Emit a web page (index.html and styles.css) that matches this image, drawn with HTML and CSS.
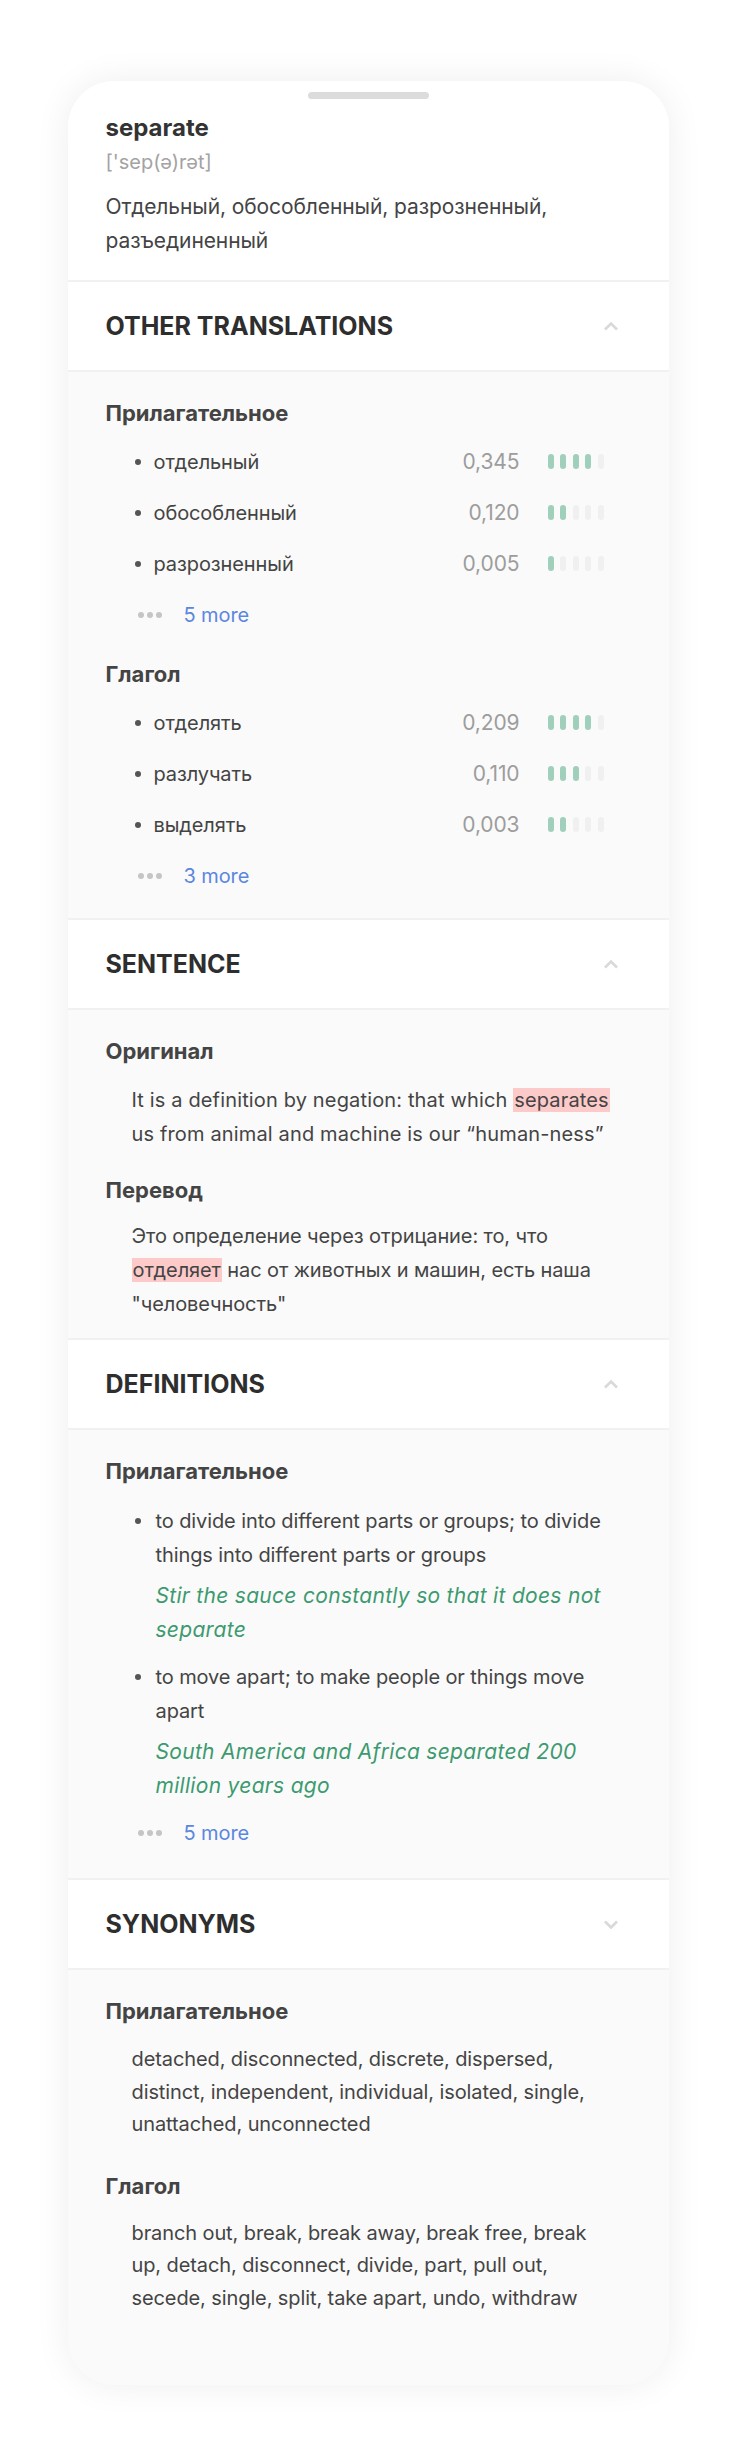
FILE: index.html
```html
<!DOCTYPE html>
<html lang="en">
<head>
<meta charset="UTF-8">
<meta name="viewport" content="width=device-width, initial-scale=1.0">
<title>separate</title>
<link rel="stylesheet" href="styles.css">
</head>
<body>
    <div class="sheet">
        <div class="handle"></div>

        <div class="word-head">
            <div class="word-title">separate</div>
            <div class="transcription">['sep(ə)rət]</div>
            <div class="main-translation">Отдельный, обособленный, разрозненный, разъединенный</div>
        </div>

        <div class="section">
            <div class="section-header">
                <span>OTHER TRANSLATIONS</span>
                <svg class="chevron" viewBox="0 0 16 10"><path d="M2 8.5L8 2.5L14 8.5"/></svg>
            </div>
            <div class="section-body">
                <div class="group-title">Прилагательное</div>
                <div class="row">
                    <span class="dot"></span>
                    <span class="word">отдельный</span>
                    <span class="freq">0,345</span>
                    <span class="bars"><i class="on"></i><i class="on"></i><i class="on"></i><i class="on"></i><i></i></span>
                </div>
                <div class="row">
                    <span class="dot"></span>
                    <span class="word">обособленный</span>
                    <span class="freq">0,120</span>
                    <span class="bars"><i class="on"></i><i class="on"></i><i></i><i></i><i></i></span>
                </div>
                <div class="row">
                    <span class="dot"></span>
                    <span class="word">разрозненный</span>
                    <span class="freq">0,005</span>
                    <span class="bars"><i class="on"></i><i></i><i></i><i></i><i></i></span>
                </div>
                <div class="row more">
                    <span class="more-dots"><b></b><b></b><b></b></span>
                    <a href="#">5 more</a>
                </div>

                <div class="group-title next">Глагол</div>
                <div class="row">
                    <span class="dot"></span>
                    <span class="word">отделять</span>
                    <span class="freq">0,209</span>
                    <span class="bars"><i class="on"></i><i class="on"></i><i class="on"></i><i class="on"></i><i></i></span>
                </div>
                <div class="row">
                    <span class="dot"></span>
                    <span class="word">разлучать</span>
                    <span class="freq">0,110</span>
                    <span class="bars"><i class="on"></i><i class="on"></i><i class="on"></i><i></i><i></i></span>
                </div>
                <div class="row">
                    <span class="dot"></span>
                    <span class="word">выделять</span>
                    <span class="freq">0,003</span>
                    <span class="bars"><i class="on"></i><i class="on"></i><i></i><i></i><i></i></span>
                </div>
                <div class="row more">
                    <span class="more-dots"><b></b><b></b><b></b></span>
                    <a href="#">3 more</a>
                </div>
            </div>
        </div>

        <div class="section">
            <div class="section-header">
                <span>SENTENCE</span>
                <svg class="chevron" viewBox="0 0 16 10"><path d="M2 8.5L8 2.5L14 8.5"/></svg>
            </div>
            <div class="section-body sentence">
                <div class="group-title">Оригинал</div>
                <p class="text original">It is a definition by negation: that which <mark>separates</mark> us from animal and machine is our “human-ness”</p>
                <div class="group-title next">Перевод</div>
                <p class="text">Это определение через отрицание: то, что <mark>отделяет</mark> нас от животных и машин, есть наша "человечность"</p>
            </div>
        </div>

        <div class="section">
            <div class="section-header">
                <span>DEFINITIONS</span>
                <svg class="chevron" viewBox="0 0 16 10"><path d="M2 8.5L8 2.5L14 8.5"/></svg>
            </div>
            <div class="section-body definitions">
                <div class="group-title">Прилагательное</div>
                <div class="def">
                    <span class="dot"></span>
                    <div>
                        <p class="def-text">to divide into different parts or groups; to divide things into different parts or groups</p>
                        <p class="example">Stir the sauce constantly so that it does not separate</p>
                    </div>
                </div>
                <div class="def">
                    <span class="dot"></span>
                    <div>
                        <p class="def-text">to move apart; to make people or things move apart</p>
                        <p class="example">South America and Africa separated 200 million years ago</p>
                    </div>
                </div>
                <div class="row more">
                    <span class="more-dots"><b></b><b></b><b></b></span>
                    <a href="#">5 more</a>
                </div>
            </div>
        </div>

        <div class="section">
            <div class="section-header">
                <span>SYNONYMS</span>
                <svg class="chevron" viewBox="0 0 16 10"><path d="M2 2.5L8 8.5L14 2.5"/></svg>
            </div>
            <div class="section-body synonyms">
                <div class="group-title">Прилагательное</div>
                <p class="text">detached, disconnected, discrete, dispersed, distinct, independent, individual, isolated, single, unattached, unconnected</p>
                <div class="group-title next">Глагол</div>
                <p class="text">branch out, break, break away, break free, break up, detach, disconnect, divide, part, pull out, secede, single, split, take apart, undo, withdraw</p>
            </div>
        </div>
    </div>
</body>
</html>
```

FILE: styles.css
```css
body {
    font-family: Inter, "Noto Sans", sans-serif;
    background-color: #fff;
    margin: 0;
    padding: 0;
    color: #444;
}
p {
    margin: 0;
}
.sheet {
    width: 601px;
    margin: 81px auto 53px;
    background-color: #fafafa;
    border-radius: 46px;
    overflow: hidden;
    box-shadow: 0 0 36px rgba(0, 0, 0, 0.07);
    padding-bottom: 54px;
}
.handle {
    width: 121px;
    height: 7px;
    margin: 0 auto;
    border-radius: 4px;
    background-color: #dcdcdc;
    position: relative;
    top: 11px;
}
.word-head {
    background-color: #fff;
    margin-top: -7px;
    padding: 32px 38px 22px;
}
.word-title {
    font-size: 24px;
    line-height: 30px;
    font-weight: 700;
    color: #333;
}
.transcription {
    margin-top: 5px;
    font-size: 20px;
    line-height: 28px;
    color: #a3a3a3;
}
.main-translation {
    margin-top: 14px;
    font-size: 21px;
    line-height: 34px;
    color: #444;
    letter-spacing: -0.1px;
}
.section-header {
    display: flex;
    align-items: center;
    justify-content: space-between;
    height: 88px;
    padding: 0 50px 0 38px;
    background-color: #fff;
    border-top: 2px solid #f1f1f1;
    border-bottom: 2px solid #f1f1f1;
    font-size: 25px;
    font-weight: 700;
    color: #2e2e2e;
}
.chevron {
    width: 16px;
    height: 10px;
    fill: none;
    stroke: #d9d9d9;
    stroke-width: 2.6;
}
.section-body {
    padding: 27px 38px 17px;
    font-size: 20px;
    letter-spacing: -0.1px;
}
.group-title {
    font-size: 22px;
    line-height: 28px;
    font-weight: 700;
    color: #444;
    letter-spacing: 0;
    margin-bottom: 9px;
}
.group-title.next {
    margin-top: 20px;
}
.row {
    display: flex;
    align-items: center;
    height: 51px;
    padding: 0 27px 0 29px;
}
.dot {
    width: 6px;
    height: 6px;
    border-radius: 50%;
    background-color: #555;
    flex-shrink: 0;
}
.row .dot {
    margin-right: 13px;
}
.word {
    flex: 1;
    color: #444;
}
.freq {
    font-size: 21px;
    color: #9d9d9d;
}
.bars {
    display: flex;
    gap: 6.5px;
    margin-left: 28px;
}
.bars i {
    display: block;
    width: 6px;
    height: 15px;
    border-radius: 3px;
    background-color: #f0f0f0;
}
.bars i.on {
    background-color: #a0d0bc;
}
.row.more {
    padding-left: 32px;
}
.more-dots {
    display: flex;
    gap: 3px;
    margin-right: 22px;
}
.more-dots b {
    width: 6px;
    height: 6px;
    border-radius: 50%;
    background-color: #c5c5c5;
}
.more a {
    color: #5b87e0;
    text-decoration: none;
}
.sentence {
    padding-bottom: 17px;
}
.sentence .group-title {
    margin-bottom: 18px;
}
.sentence .group-title.next {
    margin-top: 25px;
    margin-bottom: 15px;
}
.text {
    padding-left: 26px;
    line-height: 34px;
    color: #444;
}
.text.original {
    letter-spacing: 0.15px;
}
mark {
    background-color: #fdcaca;
    color: #444;
    padding: 0 1px;
}
.definitions {
    padding-bottom: 20px;
}
.definitions .group-title {
    margin-bottom: 19px;
}
.def {
    display: flex;
    padding-left: 29px;
    margin-bottom: 13px;
}
.def .dot {
    margin-top: 14px;
    margin-right: 15px;
}
.def-text {
    line-height: 34px;
    color: #444;
}
.example {
    margin-top: 7px;
    font-size: 21px;
    line-height: 34px;
    font-style: italic;
    letter-spacing: 0.3px;
    color: #3d9a70;
}
.definitions .row.more {
    margin-top: -9px;
}
.synonyms {
    padding-top: 27px;
}
.synonyms .group-title {
    margin-bottom: 18px;
}
.synonyms .group-title.next {
    margin-top: 31px;
    margin-bottom: 17px;
}
.synonyms .text {
    line-height: 32.5px;
    padding-right: 20px;
}
```
